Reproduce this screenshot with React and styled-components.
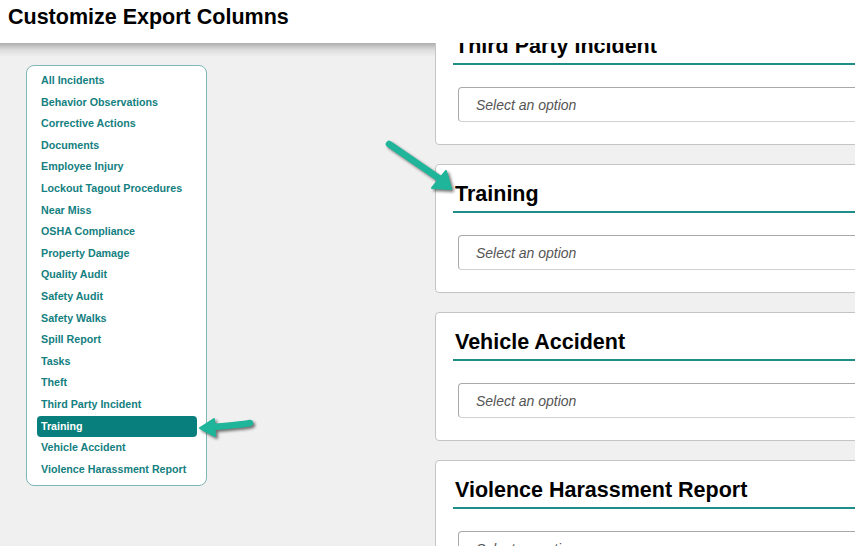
import React from "react";
import styled, { createGlobalStyle } from "styled-components";

const Global = createGlobalStyle`
  html, body { margin: 0; padding: 0; }
  body {
    background: #f0f0f0;
    font-family: Arial, "Liberation Sans", sans-serif;
    overflow: hidden;
    width: 855px;
    height: 546px;
  }
`;

const Page = styled.div`
  position: relative;
  width: 855px;
  height: 546px;
  overflow: hidden;
  display: flex;
  align-items: flex-start;
`;

const Header = styled.header`
  position: absolute;
  top: 0;
  left: 0;
  right: 0;
  height: 43px;
  background: #ffffff;
  z-index: 3;
  display: flex;
  align-items: center;
  padding-left: 8px;
  &::after {
    content: "";
    position: absolute;
    top: 43px;
    left: 0;
    width: 435px;
    height: 14px;
    background: linear-gradient(to bottom, rgba(0,0,0,0.28), rgba(0,0,0,0.08) 50%, rgba(0,0,0,0));
  }
`;

const Title = styled.h1`
  margin: 0;
  margin-top: -8px;
  font-size: 21.5px;
  font-weight: bold;
  color: #000;
  font-family: Arial, "Liberation Sans", sans-serif;
`;

const Sidebar = styled.nav`
  margin: 65px 0 0 26px;
  width: 160px;
  padding: 4px 9px 5px 10px;
  background: #ffffff;
  border: 1px solid #7fb6b6;
  border-radius: 8px;
  display: flex;
  flex-direction: column;
  flex-shrink: 0;
`;

const NavItem = styled.div`
  height: 21.6px;
  line-height: 21.6px;
  padding-left: 4px;
  font-size: 10.7px;
  font-weight: bold;
  color: ${(p) => (p.$active ? "#ffffff" : "#14807f")};
  background: ${(p) => (p.$active ? "#087f7c" : "transparent")};
  border-radius: 4px;
  white-space: nowrap;
`;

const Column = styled.main`
  margin: 16px 0 0 228px;
  width: 480px;
  flex-shrink: 0;
  display: flex;
  flex-direction: column;
  gap: 19px;
`;

const Card = styled.section`
  background: #ffffff;
  border: 1px solid #c4c4c4;
  border-radius: 4px;
  height: 129px;
  padding: 17px 0 0 17px;
  box-sizing: border-box;
  flex-shrink: 0;
`;

const Heading = styled.h2`
  margin: 0;
  padding: 0 0 4px 2px;
  font-size: 21.5px;
  line-height: 25px;
  font-weight: bold;
  color: #000;
  border-bottom: 2px solid #1f8e8a;
`;

const Select = styled.div`
  margin: 22px 0 0 5px;
  height: 33px;
  border: 1px solid #a9a9a9;
  border-bottom-color: #d0d0d0;
  border-radius: 4px;
  display: flex;
  align-items: center;
  padding-left: 17px;
  font-size: 14px;
  font-style: italic;
  color: #555;
`;

const Arrow = styled.svg`
  position: absolute;
  z-index: 4;
  overflow: visible;
  filter: drop-shadow(2px 2px 1.5px rgba(0,0,0,0.55));
`;

const items = [
  "All Incidents",
  "Behavior Observations",
  "Corrective Actions",
  "Documents",
  "Employee Injury",
  "Lockout Tagout Procedures",
  "Near Miss",
  "OSHA Compliance",
  "Property Damage",
  "Quality Audit",
  "Safety Audit",
  "Safety Walks",
  "Spill Report",
  "Tasks",
  "Theft",
  "Third Party Incident",
  "Training",
  "Vehicle Accident",
  "Violence Harassment Report",
];

const cards = ["Third Party Incident", "Training", "Vehicle Accident", "Violence Harassment Report"];

export default function App() {
  return (
    <>
      <Global />
      <Page>
        <Header>
          <Title>Customize Export Columns</Title>
        </Header>
        <Sidebar>
          {items.map((it) => (
            <NavItem key={it} $active={it === "Training"}>
              {it}
            </NavItem>
          ))}
        </Sidebar>
        <Column>
          {cards.map((c) => (
            <Card key={c}>
              <Heading>{c}</Heading>
              <Select>Select an option</Select>
            </Card>
          ))}
        </Column>
        <Arrow style={{ left: 380, top: 135 }} width="80" height="60" viewBox="0 0 80 60">
          <path d="M9 9 L60 44" stroke="#1eb59a" strokeWidth="6.5" strokeLinecap="round" fill="none" />
          <path d="M71 54 L52 53 L66 36 Z" fill="#1eb59a" stroke="#1eb59a" strokeWidth="2" strokeLinejoin="round" />
        </Arrow>
        <Arrow style={{ left: 195, top: 410 }} width="65" height="30" viewBox="0 0 65 30">
          <path d="M17 17 C30 16, 45 15, 55 13" stroke="#1eb59a" strokeWidth="6.5" strokeLinecap="round" fill="none" />
          <path d="M5 18 L19 9 L20 26 Z" fill="#1eb59a" stroke="#1eb59a" strokeWidth="2" strokeLinejoin="round" />
        </Arrow>
      </Page>
    </>
  );
}
